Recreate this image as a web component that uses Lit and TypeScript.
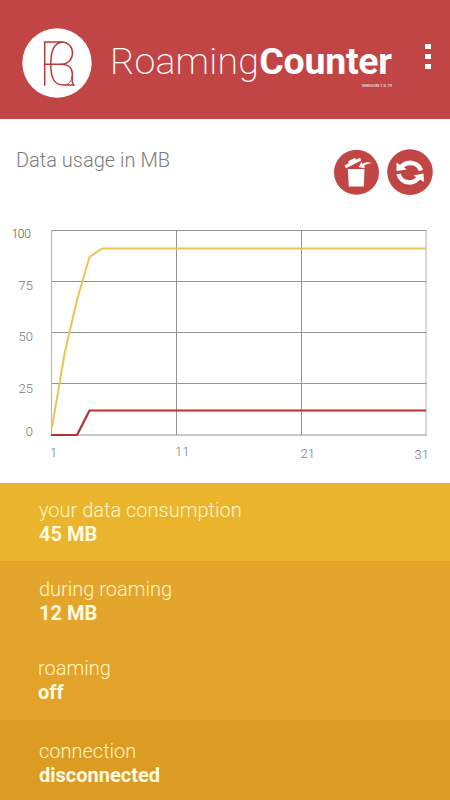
import { LitElement, html, svg, css } from "lit";
import { customElement } from "lit/decorators.js";

const rows = [
  { label: "your data consumption", value: "45 MB", cls: "r1" },
  { label: "during roaming", value: "12 MB", cls: "r2" },
  { label: "roaming", value: "off", cls: "r3" },
  { label: "connection", value: "disconnected", cls: "r4" },
];

const yTicks = [
  { t: "100", x: 30.5, y: 20, cls: "y top" },
  { t: "75", x: 33, y: 72, cls: "y" },
  { t: "50", x: 33, y: 123, cls: "y" },
  { t: "25", x: 33, y: 175, cls: "y" },
  { t: "0", x: 33, y: 218, cls: "y" },
];
const xTicks = [
  { t: "1", x: 50, y: 239 },
  { t: "11", x: 175, y: 238 },
  { t: "21", x: 300.5, y: 240 },
  { t: "31", x: 414.5, y: 240.5 },
];

@customElement("usage-chart")
class UsageChart extends LitElement {
  static styles = css`
    :host { display: block; }
    svg { display: block; }
    .grid { stroke: #929292; stroke-width: 1; }
    .side { stroke: #b4b4b4; stroke-width: 1; }
    .total { fill: none; stroke: #ebc553; stroke-width: 2; stroke-linejoin: round; }
    .roam { fill: none; stroke: #b5322f; stroke-width: 2.2; stroke-linejoin: round; }
    text { font: 300 13px Roboto, sans-serif; fill: #777; }
    .y { text-anchor: end; }
    .top { font-size: 12px; letter-spacing: -0.3px; fill: #555; }
  `;
  render() {
    return html`<svg width="450" height="263" viewBox="0 0 450 263">
      ${[12.5, 63.5, 114.5, 165.5, 217].map(
        (y) => svg`<line class="grid" x1="51" x2="427" y1=${y} y2=${y} />`)}
      ${[176.5, 301.5].map((x) => svg`<line class="grid" x1=${x} x2=${x} y1="12" y2="217" />`)}
      ${[51.5, 426].map((x) => svg`<line class="side" x1=${x} x2=${x} y1="12" y2="217" />`)}
      <polyline class="total" points="52,209.500 64.500,136 77,82 89.500,39 102,30.500 426,30.500" />
      <polyline class="roam" points="51,217 77,217 89.500,192.500 426,192.500" />
      ${yTicks.map((k) => svg`<text class=${k.cls} x=${k.x} y=${k.y}>${k.t}</text>`)}
      ${xTicks.map((k) => svg`<text x=${k.x} y=${k.y}>${k.t}</text>`)}
    </svg>`;
  }
}

@customElement("app-root")
class AppRoot extends LitElement {
  static styles = css`
    :host { display: flex; flex-direction: column; width: 450px; height: 800px; background: #fff; overflow: hidden; font-family: Roboto, sans-serif; }
    svg { display: block; }
    header { height: 119px; box-sizing: border-box; background: #c24545; display: flex; align-items: flex-start; padding: 28px 0 0 22px; color: #fff; }
    .brand { width: 282px; margin: 11px 0 0 18px; }
    .title { font-size: 37.5px; line-height: 44px; white-space: nowrap; font-weight: 200; letter-spacing: 0.22px; }
    .title b { font-weight: 700; letter-spacing: -0.25px; }
    .version { font-size: 4.3px; line-height: 5px; text-align: right; }
    .menu { display: flex; flex-direction: column; gap: 5px; margin: 16px 0 0 33px; }
    .menu i { width: 6px; height: 5px; background: #fff; }
    .bar { display: flex; height: 99px; box-sizing: border-box; padding: 29px 17px 0 16px; }
    .bar h2 { margin: 0; flex: 1; font-size: 20px; line-height: 24px; font-weight: 300; color: #7c7c7c; }
    .actions { display: flex; gap: 7px; margin-top: 1px; }
    .chart { height: 265px; flex: none; }
    .row { box-sizing: border-box; padding: 15px 0 0 39px; font-size: 20px; line-height: 24px; color: #fffbe0; white-space: nowrap; }
    .label { font-weight: 300; color: #fff7c4; }
    .value { font-weight: 700; }
    .r1 { height: 78px; background: #eab52d; }
    .r2 { height: 80px; background: #e3a52b; padding-top: 16px; }
    .r3 { height: 79px; background: #e3a22a; padding-left: 38px; }
    .r4 { height: 80px; background: #dc9b23; padding-top: 19px; }
  `;
  render() {
    return html`
      <header>
        <svg width="70" height="70" viewBox="0 0 70 70">
          <circle cx="35" cy="35" r="34.700" fill="#fff" />
          <g fill="none" stroke="#b93a3e" stroke-width="1.500">
            <path d="M22.700 57.700V14H40C46 14 50.500 18.800 50.500 25S46 36.300 39 36.300H22.700" />
            <path d="M40 14C32 15.500 28.800 22 28.800 36C28.800 50 32 57 41.500 57H51.700C49.500 55 50.300 52 50.300 46C50.300 40 46 36.300 39 36.300" />
            <path d="M50 48C49.500 53 47 56.500 43 57" stroke-width="0.900" />
          </g>
        </svg>
        <div class="brand">
          <div class="title">Roaming<b>Counter</b></div>
          <div class="version">VERSION 1.0.19</div>
        </div>
        <div class="menu"><i></i><i></i><i></i></div>
      </header>
      <div class="bar">
        <h2>Data usage in MB</h2>
        <div class="actions">
          <svg width="46" height="46" viewBox="0 0 46 46">
            <circle cx="22.500" cy="23.300" r="22.500" fill="#c24545" />
            <path fill="#fff" d="M13.800 20H30.500L29.800 37.500H14.800Z" />
            <path fill="#fff" d="M10.500 16.500L14.500 14.500L14.200 12.200L20.500 9L22.500 10.500L26 8.800L27.200 11.500L12 19.300Z" />
            <path fill="#fff" d="M38 14.300C34 12.500 31 13.300 28.700 15L27.300 12.800L24.800 18.300L31 19L30 17C32.500 14.800 35 14.100 38 14.300Z" />
          </svg>
          <svg width="46" height="46" viewBox="0 0 46 46">
            <circle cx="23" cy="23.100" r="22.800" fill="#c24545" />
            <g fill="none" stroke="#fff" stroke-width="4.600">
              <path d="M13.500 19.300A11.300 11 0 0 1 34 21.500" />
              <path d="M32.700 27A11.300 11 0 0 1 11.500 25" />
            </g>
            <path fill="#fff" d="M9.500 13.500L20 20.500L9.500 22ZM37 33L26.500 26.500L36.500 24.500Z" />
          </svg>
        </div>
      </div>
      <usage-chart class="chart"></usage-chart>
      ${rows.map((r) => html`<div class="row ${r.cls}">
        <div class="label">${r.label}</div>
        <div class="value">${r.value}</div>
      </div>`)}
    `;
  }
}
